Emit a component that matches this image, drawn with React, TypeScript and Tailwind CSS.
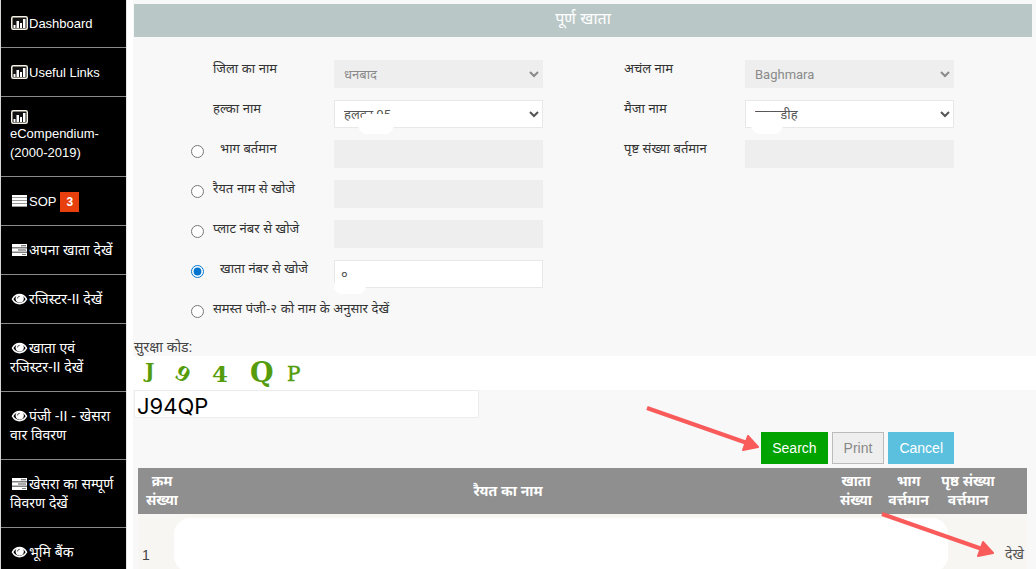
import React from 'react'
import { clsx } from 'clsx'

type IconName = 'chart' | 'list' | 'tasks' | 'eye'

interface MenuItem {
    label: string
    icon: IconName
    badge?: number
    stacked?: boolean
    latin?: boolean
}

const menu: MenuItem[] = [
    { label: 'Dashboard', icon: 'chart', latin: true },
    { label: 'Useful Links', icon: 'chart', latin: true },
    { label: 'eCompendium-(2000-2019)', icon: 'chart', stacked: true, latin: true },
    { label: 'SOP', icon: 'list', badge: 3, latin: true },
    { label: 'अपना खाता देखें', icon: 'tasks' },
    { label: 'रजिस्टर-II देखें', icon: 'eye' },
    { label: 'खाता एवं रजिस्टर-II देखें', icon: 'eye' },
    { label: 'पंजी -II - खेसरा वार विवरण', icon: 'eye' },
    { label: 'खेसरा का सम्पूर्ण विवरण देखें', icon: 'tasks' },
    { label: 'भूमि बैंक', icon: 'eye' },
]

const MenuIcon = ({ name, stacked }: { name: IconName; stacked?: boolean }) => (
    <svg
        viewBox="0 0 17 14"
        aria-hidden="true"
        className={clsx(
            'ml-px h-3.5 w-[17px]',
            stacked ? '-mt-0.5 block' : 'mr-px inline-block align-[-2px]'
        )}
    >
        {name === 'chart' && (
            <>
                <rect x="0.75" y="0.75" width="15.5" height="12.5" rx="1.5" fill="#111" stroke="#f4f1e4" strokeWidth="1.5" />
                <path d="M2.500 9h2v3h-2zM5.500 5h2.500v7H5.500zM9 7h2v5H9zM12 3h2.500v9H12z" fill="#fff" />
            </>
        )}
        {name === 'list' && (
            <>
                <path d="M1 1h15v12H1z" fill="#999" />
                <path d="M1 1h15v2H1zM1 4h15v2H1zM1 7h15v2H1zM1 10h15v2H1z" fill="#fff" />
            </>
        )}
        {name === 'tasks' && (
            <>
                <path d="M1 1h15v3.400H1zM1 5.300h15v3.400H1zM1 9.600h15V13H1z" fill="#fff" />
                <path d="M10 2.300h5v.9h-5zM7 6.600h8v.9H7zM11 10.900h4v.9h-4z" fill="#555" />
            </>
        )}
        {name === 'eye' && (
            <>
                <path d="M1.500 7.200C3 4.400 5.600 2.500 8.500 2.500s5.500 1.900 7 4.700c-1.500 2.700-4 4.500-7 4.500s-5.500-1.800-7-4.500z" fill="none" stroke="#fff" strokeWidth="1.500" />
                <circle cx="8.700" cy="6.600" r="4.100" fill="#fff" />
                <path d="M6.600 6.400c0-1.300.8-2 2-2" fill="none" stroke="#222" strokeWidth="0.900" />
            </>
        )}
    </svg>
)

const Sidebar = () => (
    <nav className="w-[127px] shrink-0 border-x border-l-neutral-300 border-r-neutral-200 bg-black">
        <ul>
            {menu.map((item) => (
                <li key={item.label} className="group border-b border-[#8a8a8a]">
                    <a
                        href="#"
                        className={clsx(
                            'block px-[9px] pt-[15px] pb-3.5 text-white group-first:pt-3.5',
                            item.latin ? 'text-[13px] leading-[19px]' : 'text-sm leading-[19px]'
                        )}
                    >
                        <MenuIcon name={item.icon} stacked={item.stacked} />
                        {item.label}
                        {item.badge && (
                            <span className="ml-1 bg-[#e8400c] px-1.5 py-[3px] text-xs leading-3 font-bold">
                                {item.badge}
                            </span>
                        )}
                    </a>
                </li>
            ))}
        </ul>
    </nav>
)

const control = "h-7 w-full border font-['Roboto','Noto_Sans',sans-serif] text-[13px]"
const enabled = 'border-[#e8e8e8] bg-white text-[#555]'
const disabledStyle = 'border-[#eee] bg-[#eee] text-[#8a8a8a] opacity-100'

// White patch that hides part of a value
const Mask = ({ className }: { className: string }) => (
    <span className={clsx('pointer-events-none absolute bg-white', className)} />
)

interface FieldProps {
    id: string
    label: string
    options?: string
    value?: string
    disabled?: boolean
    radio?: boolean
    checked?: boolean
    indent?: boolean
    mask?: React.ReactNode
}

const Label = ({ id, label, indent }: FieldProps) => (
    <label
        htmlFor={id}
        className={clsx(
            'min-w-0 self-start text-[13px] leading-[18px] whitespace-nowrap text-[#333]',
            indent && 'pl-[7px]'
        )}
    >
        {label}
    </label>
)

const Control = ({ id, label, options, value, disabled, radio, mask }: FieldProps) => (
    <div className="relative">
        {options ? (
            <select id={id} disabled={disabled} className={clsx(control, 'px-[5px]', disabled ? disabledStyle : enabled)}>
                <option>{options}</option>
            </select>
        ) : (
            <input
                id={radio ? `${id}-value` : id}
                aria-label={label}
                type="text"
                defaultValue={value}
                disabled={disabled}
                className={clsx(control, 'px-1.5', disabled ? disabledStyle : enabled)}
            />
        )}
        {mask}
    </div>
)

const rows: [FieldProps, FieldProps?][] = [
    [
        { id: 'district', label: 'जिला का नाम', options: 'धनबाद', disabled: true },
        { id: 'anchal', label: 'अचंल नाम', options: 'Baghmara', disabled: true },
    ],
    [
        {
            id: 'halka',
            label: 'हल्का नाम',
            options: 'हलका 05',
            mask: (
                <>
                    <Mask className="top-3.5 left-7 h-3 w-10" />
                    <Mask className="top-4 left-6 h-[18px] w-9 rounded-xl" />
                </>
            ),
        },
        {
            id: 'mauja',
            label: 'मैजा नाम',
            options: 'गगगाडीह',
            mask: (
                <>
                    <Mask className="top-3 left-2 h-3.5 w-7" />
                    <Mask className="top-4 left-1.5 h-[18px] w-8 rounded-xl" />
                </>
            ),
        },
    ],
    [
        { id: 'bhag', label: 'भाग बर्तमान', radio: true, indent: true, disabled: true },
        { id: 'page', label: 'पृष्ट संख्या बर्तमान', disabled: true },
    ],
    [{ id: 'raiyat', label: 'रैयत नाम से खोजे', radio: true, disabled: true }],
    [{ id: 'plot', label: 'प्लाट नंबर से खोजे', radio: true, disabled: true }],
    [
        {
            id: 'khata',
            label: 'खाता नंबर से खोजे',
            radio: true,
            checked: true,
            indent: true,
            value: '०',
            mask: <Mask className="top-[18px] left-0 h-4 w-8 rounded-lg" />,
        },
    ],
]

const Radio = ({ id, checked }: { id: string; checked?: boolean }) => (
    <input
        id={id}
        type="radio"
        name="searchBy"
        defaultChecked={checked}
        className="mt-[5px] mr-[9px] h-[13px] w-[13px] self-start justify-self-end accent-[#0075d0]"
    />
)

const grid = 'grid grid-cols-[79fr_121fr_209fr_81fr_121fr_209fr_78fr]'

const SearchForm = () => (
    <div className="space-y-3 pt-[23px]">
        {rows.map(([left, right]) => (
            <div key={left.id} className={clsx(grid, 'h-7')}>
                {left.radio ? <Radio id={left.id} checked={left.checked} /> : <span />}
                <Label {...left} />
                <Control {...left} />
                <span />
                {right && (
                    <>
                        <Label {...right} />
                        <Control {...right} />
                    </>
                )}
            </div>
        ))}
        <div className={clsx(grid, 'h-7')}>
            <Radio id="all" />
            <Label id="all" label="समस्त पंजी-२ को नाम के अनुसार देखें" />
        </div>
    </div>
)

const Captcha = () => (
    <svg
        viewBox="0 0 180 34"
        role="img"
        aria-label="Security code"
        className="h-[34px] w-[180px] fill-[#559c0c] font-['DejaVu_Serif'] font-bold"
    >
        <text x="11" y="22" fontSize="20">J</text>
        <text x="42" y="25" fontSize="20" transform="rotate(28 49 18)">9</text>
        <text x="78" y="26" fontSize="23">4</text>
        <text x="116" y="26" fontSize="27">Q</text>
        <text x="153" y="25" fontSize="20" fontWeight="400" stroke="#559c0c" strokeWidth="0.5">P</text>
    </svg>
)

const Arrow = ({ className }: { className: string }) => (
    <svg viewBox="0 0 114 48" aria-hidden="true" className={clsx('pointer-events-none absolute h-12 w-[114px]', className)}>
        <path d="M2 3L102 38" stroke="#f95b5b" strokeWidth="4" />
        <path d="M103 31L113 42L98 45Z" fill="#f95b5b" stroke="#f95b5b" strokeWidth="2" strokeLinejoin="round" />
    </svg>
)

const ResultTable = () => (
    <table className="mt-1 mr-[5px] ml-1 w-[calc(100%-9px)] table-fixed text-sm">
        <colgroup>
            <col className="w-12" />
            <col />
            <col className="w-[52px]" />
            <col className="w-[53px]" />
            <col className="w-[66px]" />
            <col className="w-[26px]" />
        </colgroup>
        <thead className="bg-[#8f8f8f] leading-[19px] text-white">
            <tr className="h-[46px]">
                <th>क्रम संख्या</th>
                <th>रैयत का नाम</th>
                <th>खाता संख्या</th>
                <th>भाग वर्त्तमान</th>
                <th>पृष्ठ संख्या वर्त्तमान</th>
                <th />
            </tr>
        </thead>
        <tbody className="bg-[#f7f6f2] text-[#444]">
            <tr className="h-[82px]">
                <td className="pl-1">1</td>
                <td colSpan={5} className="relative">
                    <Mask className="top-1 right-[79px] -left-3 h-[54px] rounded-2xl" />
                    <a href="#" className="absolute top-[30px] right-[3px] text-[#555]">
                        देखे
                    </a>
                </td>
            </tr>
        </tbody>
    </table>
)

const App = () => (
    <div className="flex h-screen overflow-hidden bg-white font-['Liberation_Sans','Noto_Sans',sans-serif]">
        <Sidebar />
        <main className="ml-1.5 min-w-0 flex-1 bg-[#f8f8f8]">
            <div className="ml-px pr-1">
                <h1 className="mt-1 h-[33px] bg-[#bac7c7] text-center text-base leading-[30px] text-white">
                    पूर्ण खाता
                </h1>
                <SearchForm />
                <label htmlFor="code" className="mt-2.5 block h-[18px] text-sm leading-[18px] text-[#444]">
                    सुरक्षा कोड:
                </label>
            </div>
            <div className="bg-white pl-px">
                <Captcha />
            </div>
            <div className="ml-px pr-1">
                <input
                    id="code"
                    type="text"
                    defaultValue="J94QP"
                    className="block h-7 w-[345px] border border-[#ececec] bg-white px-0.5 pt-1 font-['Inter'] text-[22px] leading-6 text-black"
                />
                <div className="relative mt-3.5 mr-[78px] flex justify-end gap-1 text-sm">
                    <Arrow className="-top-[27px] right-[195px]" />
                    <button type="button" className="h-8 bg-[#00a300] px-[11px] text-white">
                        Search
                    </button>
                    <button type="button" className="h-8 border border-[#bbb] bg-[#eee] px-[11px] text-[#888]">
                        Print
                    </button>
                    <button type="button" className="h-8 bg-[#5bc0de] px-[11px] text-white">
                        Cancel
                    </button>
                </div>
                <div className="relative">
                    <ResultTable />
                    <Arrow className="top-[43px] right-[38px]" />
                </div>
            </div>
        </main>
    </div>
)

export default App
